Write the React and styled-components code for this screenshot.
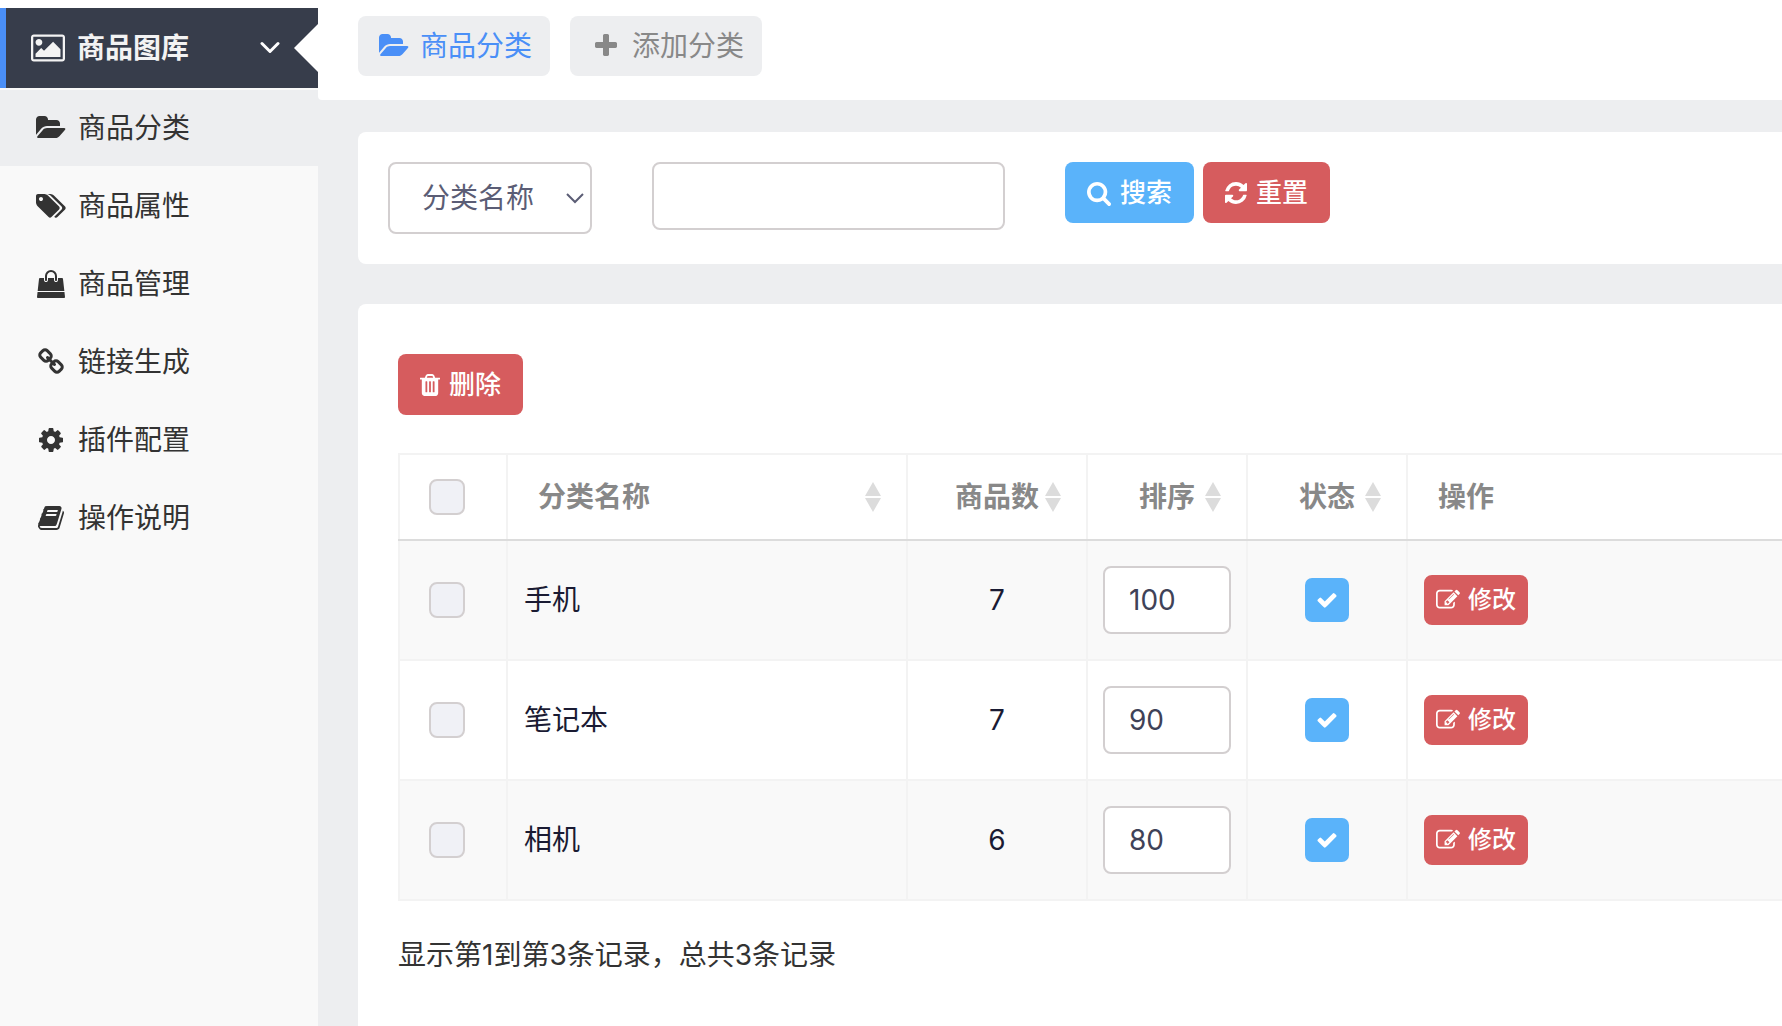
import React, { useState } from "react";
import styled, { createGlobalStyle } from "styled-components";

const GlobalStyle = createGlobalStyle`
    * {
        box-sizing: border-box;
    }
    body {
        margin: 0;
        background: #fff;
        color: #333;
        font-family: Inter, "Noto Sans CJK SC", sans-serif;
        font-size: 28px;
        line-height: 40px;
    }
    button, input, select {
        font: inherit;
    }
    a {
        color: inherit;
        text-decoration: none;
    }
`;

// 图标: box 为 viewBox 的 x 起点和宽度, 高度统一 1792
const icons = {
    image: {
        box: [-64, 1920],
        d: "M576 576q0 80-56 136t-136 56-136-56-56-136 56-136 136-56 136 56 56 136zm1024 384v448h-1408v-192l320-320 160 160 512-512zm96-704h-1600q-13 0-22.5 9.5t-9.5 22.5v1216q0 13 9.5 22.5t22.5 9.5h1600q13 0 22.5-9.5t9.5-22.5v-1216q0-13-9.5-22.5t-22.5-9.5zm160 32v1216q0 66-47 113t-113 47h-1600q-66 0-113-47t-47-113v-1216q0-66 47-113t113-47h1600q66 0 113 47t47 113z",
    },
    folder: {
        box: [-64, 1920],
        d: "M1815 952q0 31-31 66l-336 396q-43 51-120.5 86.5t-143.5 35.5h-1088q-34 0-60.5-13t-26.5-43q0-31 31-66l336-396q43-51 120.5-86.5t143.5-35.5h1088q34 0 60.5 13t26.5 43zm-343-344v160h-832q-94 0-197 47.5t-164 119.5l-337 396-5 6q0-4-.5-12.5t-.5-12.5v-960q0-92 66-158t158-66h320q92 0 158 66t66 158v32h544q92 0 158 66t66 158z",
    },
    tags: {
        box: [0, 1920],
        d: "M448 448q0-53-37.5-90.5t-90.5-37.5-90.5 37.5-37.5 90.5 37.5 90.5 90.5 37.5 90.5-37.5 37.5-90.5zm1067 576q0 53-37 90l-491 492q-39 37-91 37-53 0-90-37l-715-716q-38-37-64.5-101t-26.5-117v-416q0-52 38-90t90-38h416q53 0 117 26.5t102 64.5l715 714q37 39 37 91zm384 0q0 53-37 90l-491 492q-39 37-91 37-36 0-59-14t-53-45l470-470q37-37 37-90 0-52-37-91l-715-714q-38-38-102-64.5t-117-26.5h224q53 0 117 26.5t102 64.5l715 714q37 39 37 91z",
    },
    bag: {
        box: [0, 1792],
        d: "M1757 1408l35 313q3 28-16 50-19 21-48 21h-1664q-29 0-48-21-19-22-16-50l35-313h1722zm-93-839l86 775h-1708l86-775q3-24 21-40.5t43-16.5h256v128q0 53 37.5 90.5t90.5 37.5 90.5-37.5 37.5-90.5v-128h384v128q0 53 37.5 90.5t90.5 37.5 90.5-37.5 37.5-90.5v-128h256q25 0 43 16.5t21 40.5zm-384-185v256q0 26-19 45t-45 19-45-19-19-45v-256q0-106-75-181t-181-75-181 75-75 181v256q0 26-19 45t-45 19-45-19-19-45v-256q0-159 112.5-271.5t271.5-112.5 271.5 112.5 112.5 271.5z",
    },
    link: {
        box: [64, 1664],
        d: "M1520 1216q0-40-28-68l-208-208q-28-28-68-28-42 0-72 32 3 3 19 18.5t21.5 21.5 15 19 13 25.5 3.5 27.5q0 40-28 68t-68 28q-15 0-27.5-3.5t-25.5-13-19-15-21.5-21.5-18.5-19q-33 31-33 73 0 40 28 68l206 207q27 27 68 27 40 0 68-26l147-146q28-28 28-67zm-703-705q0-40-28-68l-206-207q-28-28-68-28-39 0-68 27l-147 146q-28 28-28 67 0 40 28 68l208 208q27 27 68 27 42 0 72-31-3-3-19-18.5t-21.5-21.5-15-19-13-25.5-3.5-27.5q0-40 28-68t68-28q15 0 27.5 3.5t25.5 13 19 15 21.5 21.5 18.5 19q33-31 33-73zm895 705q0 120-85 203l-147 146q-83 83-203 83-121 0-204-85l-206-207q-83-83-83-203 0-123 88-209l-88-88q-86 88-208 88-120 0-204-84l-208-208q-84-84-84-204t85-203l147-146q83-83 203-83 121 0 204 85l206 207q83 83 83 203 0 123-88 209l88 88q86-88 208-88 120 0 204 84l208 208q84 84 84 204z",
    },
    cog: {
        box: [128, 1536],
        d: "M1152 896q0-106-75-181t-181-75-181 75-75 181 75 181 181 75 181-75 75-181zm512-109v222q0 12-8 23t-20 13l-185 28q-19 54-39 91 35 50 107 138 10 12 10 25t-9 23q-27 37-99 108t-94 71q-12 0-26-9l-138-108q-44 23-91 38-16 136-29 186-7 28-36 28h-222q-14 0-24.5-8.5t-11.5-21.5l-28-184q-49-16-90-37l-141 107q-10 9-25 9-14 0-25-11-126-114-165-168-7-10-7-23 0-12 8-23 15-21 51-66.5t54-70.5q-27-50-41-99l-183-27q-13-2-21-12.5t-8-23.5v-222q0-12 8-23t19-13l186-28q14-46 39-92-40-57-107-138-10-12-10-24 0-10 9-23 26-36 98.5-107.5t94.5-71.5q13 0 26 10l138 107q44-23 91-38 16-136 29-186 7-28 36-28h222q14 0 24.5 8.5t11.5 21.5l28 184q49 16 90 37l142-107q9-9 24-9 13 0 25 10 129 119 165 170 7 8 7 22 0 12-8 23-15 21-51 66.5t-54 70.5q26 50 41 98l183 28q13 2 21 12.5t8 23.5z",
    },
    book: {
        box: [64, 1664],
        d: "M1703 478q40 57 18 129l-275 906q-19 64-76.5 107.5t-122.5 43.5h-923q-77 0-148.5-53.5t-99.5-131.5q-24-67-2-127 0-4 3-27t4-37q1-8-3-21.5t-3-19.5q2-11 8-21t16.5-23.5 16.5-23.5q23-38 45-91.5t30-91.5q3-10 .5-30t-.5-28q3-11 17-28t17-23q21-36 42-92t25-90q1-9-2.5-32t.5-28q4-13 22-30.5t22-22.5q19-26 42.5-84.5t27.5-96.5q1-8-3-25.5t-2-26.5q2-8 9-18t18-23 17-21q8-12 16.5-30.5t15-35 16-36 19.5-32 26.5-23.5 36-11.5 47.5 5.5l-1 3q38-9 51-9h761q74 0 114 56t18 130l-274 906q-36 119-71.5 153.5t-128.5 34.5h-869q-27 0-38 15-11 16-1 43 24 70 144 70h923q29 0 56-15.5t35-41.5l300-987q7-22 5-57 38 15 59 43zm-1064 2q-4 13 2 22.5t20 9.5h608q13 0 25.5-9.5t16.5-22.5l21-64q4-13-2-22.5t-20-9.5h-608q-13 0-25.5 9.5t-16.5 22.5zm-83 256q-4 13 2 22.5t20 9.5h608q13 0 25.5-9.5t16.5-22.5l21-64q4-13-2-22.5t-20-9.5h-608q-13 0-25.5 9.5t-16.5 22.5z",
    },
    plus: {
        box: [192, 1408],
        d: "M1600 736v192q0 40-28 68t-68 28h-416v416q0 40-28 68t-68 28h-192q-40 0-68-28t-28-68v-416h-416q-40 0-68-28t-28-68v-192q0-40 28-68t68-28h416v-416q0-40 28-68t68-28h192q40 0 68 28t28 68v416h416q40 0 68 28t28 68z",
    },
    search: {
        box: [64, 1664],
        d: "M1216 832q0-185-131.5-316.5t-316.5-131.5-316.5 131.5-131.5 316.5 131.5 316.5 316.5 131.5 316.5-131.5 131.5-316.5zm512 832q0 52-38 90t-90 38q-54 0-90-38l-343-342q-179 124-399 124-143 0-273.5-55.5t-225-150-150-225-55.5-273.5 55.5-273.5 150-225 225-150 273.5-55.5 273.5 55.5 225 150 150 225 55.5 273.5q0 220-124 399l343 343q37 37 37 90z",
    },
    refresh: {
        box: [128, 1536],
        d: "M1639 1056q0 5-1 7-64 268-268 434.5t-478 166.5q-146 0-282.5-55t-243.5-157l-129 129q-19 19-45 19t-45-19-19-45v-448q0-26 19-45t45-19h448q26 0 45 19t19 45-19 45l-137 137q71 66 161 102t187 36q134 0 250-65t186-179q11-17 53-117 8-23 30-23h192q13 0 22.5 9.5t9.5 22.5zm25-800v448q0 26-19 45t-45 19h-448q-26 0-45-19t-19-45 19-45l138-138q-148-137-349-137-134 0-250 65t-186 179q-11 17-53 117-8 23-30 23h-199q-13 0-22.5-9.5t-9.5-22.5v-7q65-268 270-434.5t480-166.5q146 0 284 55.5t245 156.5l130-129q19-19 45-19t45 19 19 45z",
    },
    trash: {
        box: [192, 1408],
        d: "M704 1376v-704q0-14-9-23t-23-9h-64q-14 0-23 9t-9 23v704q0 14 9 23t23 9h64q14 0 23-9t9-23zm256 0v-704q0-14-9-23t-23-9h-64q-14 0-23 9t-9 23v704q0 14 9 23t23 9h64q14 0 23-9t9-23zm256 0v-704q0-14-9-23t-23-9h-64q-14 0-23 9t-9 23v704q0 14 9 23t23 9h64q14 0 23-9t9-23zm-544-992h448l-48-117q-7-9-17-11h-317q-10 2-17 11zm928 32v64q0 14-9 23t-23 9h-96v948q0 83-47 143.5t-113 60.5h-832q-66 0-113-58.5t-47-141.5v-952h-96q-14 0-23-9t-9-23v-64q0-14 9-23t23-9h309l70-167q15-37 54-63t79-26h320q40 0 79 26t54 63l70 167h309q14 0 23 9t9 23z",
    },
    check: {
        box: [0, 1792],
        d: "M1671 566q0 40-28 68l-724 724-136 136q-28 28-68 28t-68-28l-136-136-362-362q-28-28-28-68t28-68l136-136q28-28 68-28t68 28l294 295 656-657q28-28 68-28t68 28l136 136q28 28 28 68z",
    },
    edit: {
        box: [0, 1792],
        d: "M888 1184l116-116-152-152-116 116v56h96v96h56zm440-720q-16-16-33 1l-350 350q-17 17-1 33t33-1l350-350q17-17 1-33zm80 594v190q0 119-84.5 203.5t-203.5 84.5h-832q-119 0-203.5-84.5t-84.5-203.5v-832q0-119 84.5-203.5t203.5-84.5h832q63 0 117 25 15 7 18 23 3 17-9 29l-49 49q-14 14-32 8-23-6-45-6h-832q-66 0-113 47t-47 113v832q0 66 47 113t113 47h832q66 0 113-47t47-113v-126q0-13 9-22l64-64q15-15 35-7t20 29zm-96-738l288 288-672 672h-288v-288zm444 132l-92 92-288-288 92-92q28-28 68-28t68 28l152 152q28 28 28 68t-28 68z",
    },
};

const Icon = ({ name, size = 28 }) => {
    const { box, d } = icons[name];
    return (
        <svg
            width={Math.round((size * box[1]) / 1792)}
            height={size}
            viewBox={`${box[0]} 0 ${box[1]} 1792`}
            fill="currentColor"
            aria-hidden="true"
        >
            <path d={d} />
        </svg>
    );
};

const Page = styled.div`
    display: flex;
    min-height: 100vh;
`;
const Sidebar = styled.aside`
    flex: 0 0 318px;
    margin-top: 8px;
    background: #f9f9f9;
`;
const MenuTitle = styled.button`
    position: relative;
    display: flex;
    align-items: center;
    width: 100%;
    height: 80px;
    margin-bottom: 2px;
    padding: 0 38px 0 24px;
    border: 0;
    border-left: 6px solid #4a8ff7;
    background: #373d4b;
    color: #f3f3f3;
    font-weight: bold;
    text-align: left;
`;
const MenuTitleText = styled.span`
    flex: 1;
`;
const MenuArrow = styled.span`
    position: absolute;
    top: 16px;
    right: 0;
    border: 24px solid transparent;
    border-left-width: 0;
    border-right-color: #fff;
`;
const MenuItem = styled.a`
    display: flex;
    align-items: center;
    height: 76px;
    margin-bottom: 2px;
    padding-left: 33px;
    background: ${(props) => (props.$active ? "#edeef0" : "transparent")};
`;
const IconBox = styled.span`
    display: flex;
    justify-content: center;
    width: 36px;
    margin-right: ${(props) => props.$gap || 8}px;
`;
const Main = styled.main`
    flex: 1;
    display: flex;
    flex-direction: column;
    min-width: 0;
    background: #edeef0;
`;
const Tabs = styled.nav`
    display: flex;
    gap: 20px;
    padding: 16px 40px 24px;
    border-radius: 0 0 0 4px;
    background: #fff;
`;
const Tab = styled.a`
    display: flex;
    align-items: center;
    height: 60px;
    padding: 0 18px;
    border-radius: 8px;
    background: #edeef0;
    color: ${(props) => (props.$active ? "#4a8ff7" : "#888")};
`;
const Card = styled.section`
    margin-left: 40px;
    border-radius: 8px 0 0 8px;
    background: #fff;
`;
const SearchCard = styled(Card)`
    display: flex;
    align-items: flex-start;
    gap: 60px;
    margin-top: 32px;
    padding: 30px;
`;
const ListCard = styled(Card)`
    flex: 1;
    margin-top: 40px;
    padding: 50px 0 50px 40px;
    border-radius: 8px 0 0 0;
`;
const SelectBox = styled.div`
    display: grid;
    align-items: center;
    width: 204px;

    > * {
        grid-area: 1 / 1;
    }
    > svg {
        justify-self: end;
        margin-right: 8px;
        pointer-events: none;
    }
`;
const Select = styled.select`
    appearance: none;
    height: 72px;
    padding: 0 32px;
    border: 2px solid #d3cfd0;
    border-radius: 8px;
    background: #fff;
    color: #5b5d75;
`;
const TextInput = styled.input`
    width: ${(props) => props.$width}px;
    height: 68px;
    padding: 0 24px;
    border: 2px solid #d3cfd0;
    border-radius: 8px;
    background: #fff;
    color: #3f4258;
`;
const ButtonGroup = styled.div`
    display: flex;
    gap: 9px;
`;
const Button = styled.button`
    display: inline-flex;
    align-items: center;
    gap: ${(props) => (props.$small ? 8 : 9)}px;
    height: ${(props) => (props.$small ? 50 : 61)}px;
    padding: 0 ${(props) => (props.$small ? 12 : 22)}px;
    border: 0;
    border-radius: 8px;
    background: ${(props) => (props.$primary ? "#5ab3fa" : "#d65c5e")};
    color: #fff;
    font-size: ${(props) => (props.$small ? 24 : 26)}px;
    font-weight: 500;
    vertical-align: middle;
`;
const StatusButton = styled.button`
    display: inline-flex;
    align-items: center;
    justify-content: center;
    width: 44px;
    height: 44px;
    padding: 0;
    border: 0;
    border-radius: 7px;
    background: ${(props) => (props.$on ? "#5ab3fa" : "#ccc")};
    color: #fff;
    vertical-align: middle;
`;
const Table = styled.table`
    width: 100%;
    margin-top: 38px;
    border-collapse: collapse;
    table-layout: fixed;
`;
const Th = styled.th`
    width: ${(props) => (props.$width ? props.$width + "px" : "auto")};
    height: 86px;
    padding: 0 ${(props) => (props.$pad ? props.$pad : 25)}px;
    border: 2px solid #f3f3f3;
    border-right-width: ${(props) => (props.$width ? 2 : 0)}px;
    border-bottom-color: #dcdcdc;
    color: #888;
    text-align: left;
`;
const SortHead = styled.button`
    display: flex;
    align-items: center;
    width: 100%;
    padding: 0 0 0 ${(props) => (props.$center ? 16 : 5)}px;
    border: 0;
    background: none;
    color: inherit;
    text-align: ${(props) => (props.$center ? "center" : "left")};
    white-space: nowrap;
`;
const SortText = styled.span`
    flex: 1;
`;
const Row = styled.tr`
    background: ${(props) => (props.$odd ? "#f9f9f9" : "#fff")};
`;
const Td = styled.td`
    height: 120px;
    padding: 0 ${(props) => (props.$pad ? props.$pad : 16)}px;
    border: 2px solid #f3f3f3;
    border-right-width: ${(props) => (props.$last ? 0 : 2)}px;
    color: #1a1b33;
    text-align: ${(props) => (props.$center ? "center" : "left")};
`;
const Checkbox = styled.input`
    appearance: none;
    display: block;
    width: 36px;
    height: 36px;
    margin: 0;
    border: 2px solid #d3cfd0;
    border-radius: 8px;
    background: #f0f1f6;

    &:checked {
        background: #5ab3fa;
    }
`;
const Summary = styled.p`
    margin: 34px 0 0;
`;

const menu = [
    { icon: "folder", text: "商品分类" },
    { icon: "tags", text: "商品属性" },
    { icon: "bag", text: "商品管理" },
    { icon: "link", text: "链接生成" },
    { icon: "cog", text: "插件配置" },
    { icon: "book", text: "操作说明" },
];

const categories = [
    { id: 1, name: "手机", count: 7, sort: 100 },
    { id: 2, name: "笔记本", count: 7, sort: 90 },
    { id: 3, name: "相机", count: 6, sort: 80 },
];

const Sortable = ({ text, center }) => (
    <SortHead type="button" $center={center}>
        <SortText>{text}</SortText>
        <svg width="16" height="30" viewBox="0 0 16 30" fill="#dcdcdc" aria-hidden="true">
            <path d="M8 0L16 14H0zM0 16H16L8 30z" />
        </svg>
    </SortHead>
);

const CategoryRow = ({ item, odd, checked, onCheck }) => {
    const [on, setOn] = useState(true);

    return (
        <Row $odd={odd}>
            <Td $pad={29}>
                <Checkbox type="checkbox" aria-label={item.name} checked={checked} onChange={onCheck} />
            </Td>
            <Td>{item.name}</Td>
            <Td $center>{item.count}</Td>
            <Td $center $pad={10}>
                <TextInput type="text" aria-label="排序" $width={128} defaultValue={item.sort} />
            </Td>
            <Td $center>
                <StatusButton type="button" aria-label="状态" $on={on} onClick={() => setOn(!on)}>
                    {on && <Icon name="check" size={22} />}
                </StatusButton>
            </Td>
            <Td $last>
                <Button type="button" $small>
                    <Icon name="edit" size={24} />
                    修改
                </Button>
            </Td>
        </Row>
    );
};

const App = () => {
    const [selected, setSelected] = useState([]);

    const toggle = (id) => {
        setSelected(selected.includes(id) ? selected.filter((v) => v !== id) : [...selected, id]);
    };
    const toggleAll = (e) => {
        setSelected(e.target.checked ? categories.map((item) => item.id) : []);
    };

    return (
        <Page>
            <GlobalStyle />
            <Sidebar>
                <MenuTitle type="button">
                    <IconBox $gap={11}>
                        <Icon name="image" size={32} />
                    </IconBox>
                    <MenuTitleText>商品图库</MenuTitleText>
                    <svg width="20" height="14" viewBox="0 0 20 14" fill="none" stroke="#fff" strokeWidth="3" aria-hidden="true">
                        <path d="M2 2.5L10 10.5L18 2.5" strokeLinecap="round" strokeLinejoin="round" />
                    </svg>
                    <MenuArrow />
                </MenuTitle>
                <nav>
                    {menu.map((item, i) => (
                        <MenuItem key={item.text} href="#" $active={i === 0}>
                            <IconBox $gap={9}>
                                <Icon name={item.icon} />
                            </IconBox>
                            {item.text}
                        </MenuItem>
                    ))}
                </nav>
            </Sidebar>
            <Main>
                <Tabs>
                    <Tab href="#" $active>
                        <IconBox>
                            <Icon name="folder" />
                        </IconBox>
                        商品分类
                    </Tab>
                    <Tab href="#">
                        <IconBox>
                            <Icon name="plus" />
                        </IconBox>
                        添加分类
                    </Tab>
                </Tabs>
                <SearchCard>
                    <SelectBox>
                        <Select aria-label="搜索字段">
                            <option>分类名称</option>
                        </Select>
                        <svg width="18" height="12" viewBox="0 0 18 12" fill="none" stroke="#5b5d75" strokeWidth="2" aria-hidden="true">
                            <path d="M1 2L9 10L17 2" />
                        </svg>
                    </SelectBox>
                    <TextInput type="text" aria-label="关键词" $width={353} />
                    <ButtonGroup>
                        <Button type="button" $primary>
                            <Icon name="search" size={26} />
                            搜索
                        </Button>
                        <Button type="button">
                            <Icon name="refresh" size={26} />
                            重置
                        </Button>
                    </ButtonGroup>
                </SearchCard>
                <ListCard>
                    <Button type="button">
                        <Icon name="trash" size={26} />
                        删除
                    </Button>
                    <Table>
                        <thead>
                            <tr>
                                <Th $width={108} $pad={29}>
                                    <Checkbox
                                        type="checkbox"
                                        aria-label="全选"
                                        checked={selected.length === categories.length}
                                        onChange={toggleAll}
                                    />
                                </Th>
                                <Th $width={400}>
                                    <Sortable text="分类名称" />
                                </Th>
                                <Th $width={180}>
                                    <Sortable text="商品数" center />
                                </Th>
                                <Th $width={160}>
                                    <Sortable text="排序" center />
                                </Th>
                                <Th $width={160}>
                                    <Sortable text="状态" center />
                                </Th>
                                <Th $pad={30}>操作</Th>
                            </tr>
                        </thead>
                        <tbody>
                            {categories.map((item, i) => (
                                <CategoryRow
                                    key={item.id}
                                    item={item}
                                    odd={i % 2 === 0}
                                    checked={selected.includes(item.id)}
                                    onCheck={() => toggle(item.id)}
                                />
                            ))}
                        </tbody>
                    </Table>
                    <Summary>显示第1到第3条记录，总共3条记录</Summary>
                </ListCard>
            </Main>
        </Page>
    );
};

export default App;
